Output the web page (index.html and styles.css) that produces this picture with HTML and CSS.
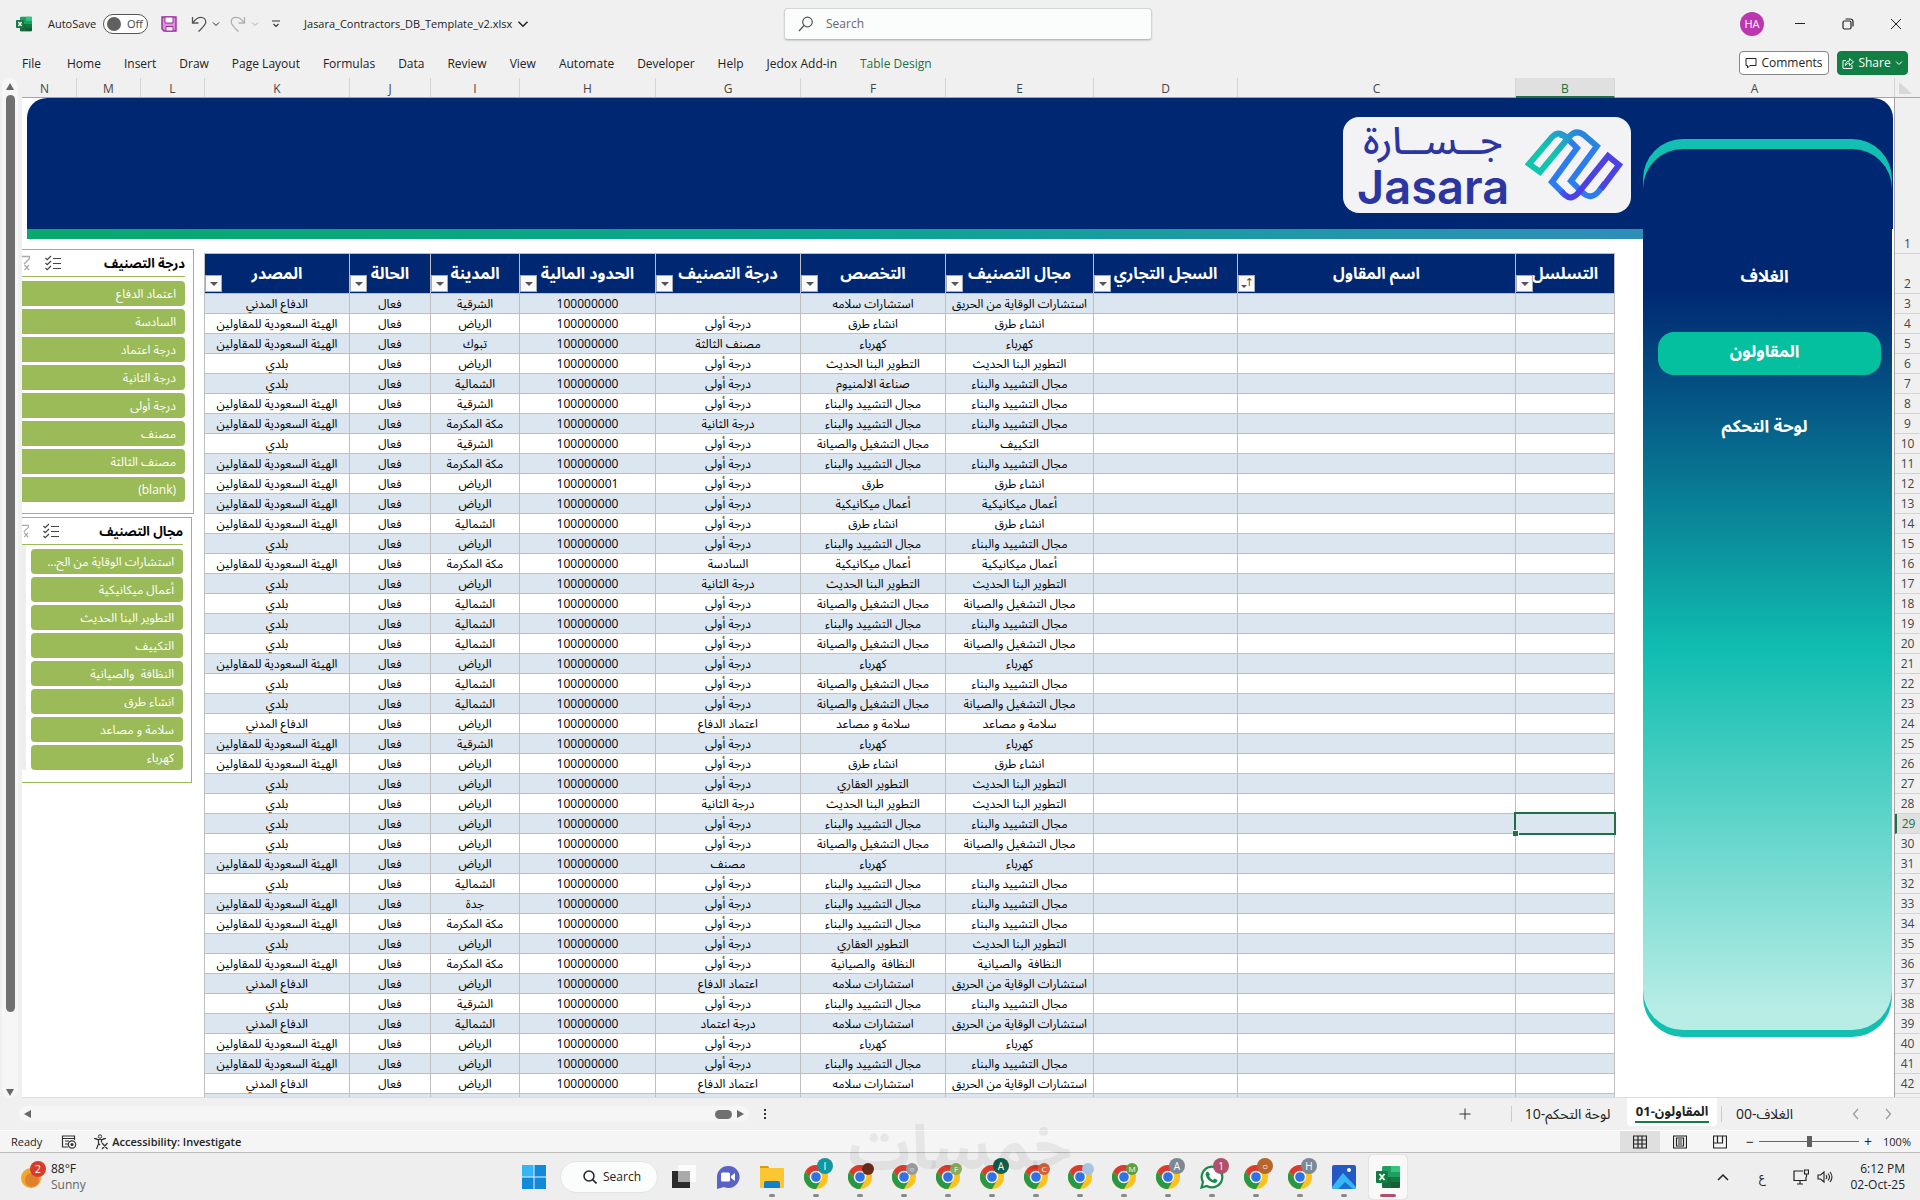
FILE: index.html
```html
<!DOCTYPE html>
<html lang="en">
<head>
<meta charset="utf-8">
<title>Jasara_Contractors_DB_Template_v2.xlsx - Excel</title>
<link rel="stylesheet" href="styles.css">
</head>
<body>
<svg class="defs" aria-hidden="true">
  <defs>
    <symbol id="chrome" viewBox="0 0 24 24">
      <circle cx="12" cy="12" r="12" fill="#fcc31e"/>
      <path d="M1.6 6A12 12 0 0 1 22.4 6H12A6 6 0 0 0 6.8 15Z" fill="#db3b2c"/>
      <path d="M1.6 6A12 12 0 0 0 12 24L17.2 15A6 6 0 0 1 6.8 15Z" fill="#269846"/>
      <circle cx="12" cy="12" r="6.2" fill="#f3f3f3"/>
      <circle cx="12" cy="12" r="4.8" fill="#2f72e8"/>
    </symbol>
    <symbol id="chevron" viewBox="0 0 8 8"><path d="M1 2.5L4 5.5L7 2.5" fill="none" stroke="currentColor"/></symbol>
    <symbol id="excel" viewBox="0 0 24 24">
      <rect x="6" y="1" width="18" height="22" rx="1.5" fill="#1f9f5f"/>
      <path d="M6 12h9v11H7.500a1.500 1.500 0 0 1-1.500-1.500z" fill="#176b3d"/>
      <path d="M15 1h7.500a1.500 1.500 0 0 1 1.500 1.500V7h-9z" fill="#35c481"/>
      <path d="M15 12h9v5h-9z" fill="#107c41"/><path d="M15 17h9v4.500a1.500 1.500 0 0 1-1.500 1.500H15z" fill="#185c37"/>
      <rect x="0" y="6" width="12" height="12" rx="1" fill="#107c41"/>
      <path d="M3.500 9l5 6M8.500 9l-5 6" stroke="#fff" stroke-width="1.800"/>
    </symbol>
    <symbol id="multi" viewBox="0 0 16 16">
      <path d="M.5 3l1.700 1.700L6 1M.5 8l1.700 1.700L6 6M.5 13l1.700 1.700L6 11M8 3.500h8M8 8.500h8M8 13.500h8" fill="none" stroke="#444" stroke-width="1.200"/>
    </symbol>
    <symbol id="clear" viewBox="8 0 8 16">
      <path d="M4 1.500h11.500v2L10 9M10.500 10l4.500 5M15 10l-4.500 5" fill="none" stroke="#aaa" stroke-width="1.300"/>
    </symbol>
  </defs>
</svg>

<header class="titlebar">
  <div class="quick">
    <svg class="i16"><use href="#excel"/></svg>
    <span class="autosave" id="as">AutoSave</span>
    <button class="toggle" aria-labelledby="as"><i></i>Off</button>
    <button class="tool save" aria-label="Save"><svg class="i16" viewBox="0 0 16 16"><path d="M1 1h14v14H3l-2-2z" fill="#dc94d6" stroke="#9a2da0" stroke-width="1.400"/><path d="M4 1h8v6H4z" fill="#fff" stroke="#9a2da0"/><path d="M5 10.500h7V15H5z" fill="#fff" stroke="#9a2da0"/></svg></button>
    <button class="tool undo" aria-label="Undo"><svg class="i16" viewBox="0 0 16 16"><path d="M1.500 1v6h6M1.800 6.700C4 3.500 6.500 1.300 10 1.300c3 0 4.800 2 4.800 4.700 0 3-3.300 5.500-7.300 9.500" fill="none" stroke="#555" stroke-width="1.300"/></svg><svg class="i8"><use href="#chevron"/></svg></button>
    <button class="tool redo" aria-label="Redo"><svg class="i16" viewBox="0 0 16 16"><path d="M14.500 1v6h-6M14.200 6.700C12 3.500 9.500 1.300 6 1.300 3 1.300 1.200 3.300 1.200 6c0 3 3.300 5.500 7.300 9.500" fill="none" stroke="#b0b0b0" stroke-width="1.300"/></svg><svg class="i8"><use href="#chevron"/></svg></button>
    <button class="tool more" aria-label="Customize"><svg class="i8" viewBox="0 0 8 8"><path d="M0 1h8M1.500 4L4 6.500 6.500 4" fill="none" stroke="#333" stroke-width="1.200"/></svg></button>
    <button class="tool filename">Jasara_Contractors_DB_Template_v2.xlsx<svg class="i12"><use href="#chevron"/></svg></button>
  </div>
  <label class="search">
    <svg class="i16" viewBox="0 0 16 16"><circle cx="9.500" cy="6" r="4.800" fill="none" stroke="#555" stroke-width="1.200"/><path d="M6 9.500L1 15" stroke="#555" stroke-width="1.300"/></svg>
    <input type="text" placeholder="Search" aria-label="Search">
  </label>
  <div class="window">
    <button class="avatar">HA</button>
    <button class="tool" aria-label="Minimize"><svg class="i12" viewBox="0 0 12 12"><path d="M1 5.500h10" stroke="#222"/></svg></button>
    <button class="tool" aria-label="Restore"><svg class="i12" viewBox="0 0 12 12"><rect x="1" y="3" width="8" height="8" rx="1.500" fill="none" stroke="#222" stroke-width="1.200"/><path d="M3.500 1h5A2.500 2.500 0 0 1 11 3.500v5" fill="none" stroke="#222" stroke-width="1.200"/></svg></button>
    <button class="tool" aria-label="Close"><svg class="i12" viewBox="0 0 12 12"><path d="M1 1l10 10M11 1L1 11" stroke="#222"/></svg></button>
  </div>
</header>

<div class="ribbon">
  <nav class="tabs">
    <a href="#">File</a><a href="#">Home</a><a href="#">Insert</a><a href="#">Draw</a><a href="#">Page Layout</a><a href="#">Formulas</a><a href="#">Data</a><a href="#">Review</a><a href="#">View</a><a href="#">Automate</a><a href="#">Developer</a><a href="#">Help</a><a href="#">Jedox Add-in</a><a href="#" class="on">Table Design</a>
  </nav>
  <button class="pill"><svg class="i12" viewBox="0 0 12 12"><path d="M1 1.500h10v7H5L2.500 11V8.500H1z" fill="none" stroke="#222"/></svg>Comments</button>
  <button class="pill share"><svg class="i12" viewBox="0 0 12 12"><path d="M4 3.500H1v8h9V8M3.500 8.500C3.500 5.500 5 4 7.500 4V1.500L11.500 5 7.500 8.500V6C6 6 4.500 6.700 3.500 8.500z" fill="none" stroke="#fff"/></svg>Share<svg class="i8"><use href="#chevron"/></svg></button>
</div>

<div class="workbook">
  <div class="vscroll"><i class="up"></i><i class="thumb"></i><i class="down"></i></div>
  <div class="sheet">
    <div class="colheads">
      <span class="cut">N</span><span>M</span><span>L</span><span>K</span><span>J</span><span>I</span><span>H</span><span>G</span><span>F</span><span>E</span><span>D</span><span>C</span><span class="sel">B</span><span>A</span><span class="corner"><i></i></span>
    </div>
    <div class="canvas">
      <div class="banner">
        <div class="brand">
          <div class="brandtext"><span lang="ar" dir="rtl">جــســارة</span><span class="latin">Jasara</span></div>
          <svg class="mark" viewBox="0 0 100 72">
            <defs>
              <linearGradient id="g1" gradientUnits="userSpaceOnUse" x1="0" y1="50" x2="50" y2="0"><stop offset=".5" stop-color="#13c4ae"/><stop offset="1" stop-color="#2a86dc"/></linearGradient>
              <linearGradient id="g2" gradientUnits="userSpaceOnUse" x1="26" y1="52" x2="60" y2="66"><stop offset="0" stop-color="#2c7cf0"/><stop offset=".6" stop-color="#4c42e4"/></linearGradient>
            </defs>
            <g fill="none" stroke-width="6">
              <path d="M72 17L46 52L57 63Q66 72 74 62L80 54" stroke="#2c7cf0"/>
              <path d="M34 6Q38 5 42 9L52 19L27 53L38 64" stroke="#2c7cf0"/>
              <path d="M36 62L40 66Q47 72 54 63L83 27L94 36L76 60" stroke="url(#g2)"/>
              <path d="M40 8Q34 1 27 8L4 35L15 43L44 8Q51 0 59 6L74 19" stroke="url(#g1)"/>
            </g>
          </svg>
        </div>
      </div>
      <div class="stripe"></div>
      <div class="slicers">
        <section class="slicer first" dir="rtl" lang="ar">
          <h2>درجة التصنيف<svg class="i16"><use href="#multi"/></svg><svg class="half"><use href="#clear"/></svg></h2>
          <div class="items"><button>اعتماد الدفاع</button><button>السادسة</button><button>درجة اعتماد</button><button>درجة الثانية</button><button>درجة أولى</button><button>مصنف</button><button>مصنف الثالثة</button><button dir="ltr">(blank)</button></div>
        </section>
        <section class="slicer second" dir="rtl" lang="ar">
          <h2>مجال التصنيف<svg class="i16"><use href="#multi"/></svg><svg class="half"><use href="#clear"/></svg></h2>
          <div class="items"><button>استشارات الوقاية من الح...</button><button>أعمال ميكانيكية</button><button>التطوير البنا الحديث</button><button>التكييف</button><button>النظافة&nbsp; والصيانية</button><button>انشاء طرق</button><button>سلامة و مصاعد</button><button>كهرباء</button></div>
        </section>
      </div>
      <table class="data" dir="rtl" lang="ar">
        <colgroup><col class="wb"><col><col class="wd"><col class="we"><col class="wg"><col class="wg"><col class="wh"><col class="wi"><col class="wj"><col class="wg"></colgroup>
        <thead><tr>
          <th>التسلسل<button aria-label="Filter"></button></th><th>اسم المقاول<button class="sorted" aria-label="Sorted"></button></th><th>السجل التجاري<button aria-label="Filter"></button></th><th>مجال التصنيف<button aria-label="Filter"></button></th><th>التخصص<button aria-label="Filter"></button></th><th>درجة التصنيف<button aria-label="Filter"></button></th><th>الحدود المالية<button aria-label="Filter"></button></th><th>المدينة<button aria-label="Filter"></button></th><th>الحالة<button aria-label="Filter"></button></th><th>المصدر<button aria-label="Filter"></button></th>
        </tr></thead>
        <tbody id="rows"></tbody>
      </table>
      <aside class="side" dir="rtl" lang="ar">
        <nav><a href="#">الغلاف</a><a href="#" class="on">المقاولون</a><a href="#">لوحة التحكم</a></nav>
      </aside>
      <div class="rowheads" id="rowheads"></div>
    </div>
  </div>
</div>

<div class="sheetbar">
  <div class="hscroll"><i class="left"></i><i class="thumb"></i><i class="right"></i></div>
  <span class="dots"><i></i><i></i><i></i></span>
  <button class="add" aria-label="New sheet"><svg class="i16" viewBox="0 0 16 16"><path d="M2.500 8h11M8 2.500v11" stroke="#333"/></svg></button>
  <nav class="sheets" lang="ar"><a href="#" dir="rtl">لوحة التحكم-10</a><a href="#" dir="rtl" class="on"><span>المقاولون-01</span></a><a href="#" dir="rtl">الغلاف-00</a></nav>
  <div class="arrows"><svg class="i12" viewBox="0 0 12 12"><path d="M8 1L3.500 6 8 11" fill="none" stroke="#999" stroke-width="1.200"/></svg><svg class="i12" viewBox="0 0 12 12"><path d="M4 1l4.500 5L4 11" fill="none" stroke="#999" stroke-width="1.200"/></svg></div>
</div>

<div class="status">
  <span>Ready</span>
  <svg class="i16" viewBox="0 0 16 16"><path d="M7 13H1.500V2h12v4M1.500 4.500h12M4 7h4M4 10h3" fill="none" stroke="#333" stroke-width="1.200"/><circle cx="11" cy="10.500" r="3.700" fill="none" stroke="#333" stroke-width="1.200"/><circle cx="11" cy="10.500" r="1.600" fill="#333"/></svg>
  <svg class="i16 acc" viewBox="0 0 16 16"><circle cx="7" cy="2.500" r="1.700" fill="none" stroke="#333"/><path d="M1.500 4.500l4 1.500v4L3.500 15M12.500 4.500l-4 1.500v2.500M1.500 4.500L5 5.500h4l3.500-1M6 10l1 1M9 9l5.500 6M14.500 9L9 15" fill="none" stroke="#333" stroke-width="1.200"/></svg>
  <b>Accessibility: Investigate</b>
  <div class="views">
    <button class="on" aria-label="Normal"><svg class="i14" viewBox="0 0 14 14"><path d="M.5 1h13v12H.5zM.5 5h13M.5 9h13M5 1v12M9 1v12" fill="none" stroke="#222" stroke-width="1.200"/></svg></button>
    <button aria-label="Page layout"><svg class="i14" viewBox="0 0 14 14"><path d="M.5 1h13v12H.5zM3.500 3h7v8h-7zM5 5h4M5 7h4M5 9h4" fill="none" stroke="#222" stroke-width="1.200"/></svg></button>
    <button aria-label="Page break"><svg class="i14" viewBox="0 0 14 14"><path d="M.5 1h13v12H.5zM4.500 1v7h5V1M.5 8H4" fill="none" stroke="#222" stroke-width="1.200"/></svg></button>
  </div>
  <span class="sign">−</span><input class="zoom" type="range" min="0" max="100" value="50" aria-label="Zoom"><span class="sign">+</span>
  <span class="pct">100%</span>
</div>

<footer class="taskbar">
  <div class="weather">
    <svg viewBox="0 0 26 30"><circle cx="10" cy="17" r="10" fill="#f0a52c"/><circle cx="11" cy="19" r="7" fill="#e0802e"/><circle cx="17" cy="8" r="8" fill="#d63c2a"/><text x="17" y="12" text-anchor="middle" class="badge">2</text></svg>
    <div>88°F<br><span>Sunny</span></div>
  </div>
  <div class="apps" id="apps">
    <button class="app" aria-label="Start"><svg class="i24" viewBox="0 0 24 24"><path d="M0 0h11.500v11.500H0z" fill="#34b6f4"/><path d="M12.500 0H24v11.500H12.500zM0 12.500h11.500V24H0zM12.500 12.500H24V24H12.500z" fill="#1389dc"/></svg></button>
    <button class="find"><svg class="i14" viewBox="0 0 14 14"><circle cx="6" cy="6" r="5" fill="none" stroke="#222" stroke-width="1.500"/><path d="M9.500 9.500L13.500 13.500" stroke="#222" stroke-width="1.600"/></svg>Search</button>
    <button class="app" aria-label="Task view"><svg class="i24" viewBox="0 0 24 24"><rect x="0" y="6" width="18" height="17" fill="#2b2a2c"/><rect x="6" y="0" width="18" height="17" fill="#fff" opacity=".8"/><rect x="6" y="6" width="12" height="11" fill="#aaa"/></svg></button>
    <button class="app" aria-label="Chat"><svg class="i24" viewBox="0 0 24 24"><path d="M12 1a11 11 0 1 1-4 21L1 24V12A11 11 0 0 1 12 1z" fill="#5a62c8"/><rect x="5" y="7.500" width="9" height="9" rx="1.500" fill="#fff"/><path d="M15 11l4-3v8l-4-3z" fill="#fff"/></svg></button>
    <button class="app run" aria-label="Files"><svg class="i24" viewBox="0 0 24 24"><path d="M0 1h8l2 3H0z" fill="#d99a12"/><rect y="3" width="24" height="20" rx="1" fill="#fcc633"/><path d="M4 23v-5a2 2 0 0 1 2-2h12a2 2 0 0 1 2 2v5z" fill="#1380cc"/></svg></button>
  </div>
  <div class="tray">
    <svg class="i12" viewBox="0 0 12 12"><path d="M1 9l5-5 5 5" fill="none" stroke="#222" stroke-width="1.500"/></svg>
    <span lang="ar">ع</span>
    <svg class="i16" viewBox="0 0 16 16"><path d="M10 2H1v9.500h12V8M4 15h6M7 11.500V15M11.500 1h4v4h-4zM13.500 5v3" fill="none" stroke="#222" stroke-width="1.200"/></svg>
    <svg class="i16" viewBox="0 0 16 16"><path d="M1 6h2.500L7 3v10L3.500 10H1zM9 6q1.500 2 0 4M11 4.500q3 3.500 0 7M13 3q4 5 0 10" fill="none" stroke="#222" stroke-width="1.100"/></svg>
    <time>6:12 PM<br>02-Oct-25</time>
  </div>
</footer>
<div class="watermark" lang="ar" dir="rtl">خمسات</div>
<script src="app.js"></script>
</body>
</html>
```
FILE: styles.css
```css
* { box-sizing: border-box; }
body {
  margin: 0;
  height: 100vh;
  display: flex;
  flex-direction: column;
  overflow: hidden;
  position: relative;
  background: #f0f0f0;
  color: #222;
  font: 12px/16px "Open Sans", "Noto Sans Arabic", "DejaVu Sans", sans-serif;
}
button { font: inherit; color: inherit; border: 0; padding: 0; background: none; }
a { color: inherit; text-decoration: none; }
i { display: block; }
svg { flex: none; display: block; }
.defs { position: absolute; width: 0; height: 0; }
.i8 { width: 8px; height: 8px; }
.i12 { width: 12px; height: 12px; }
.i14 { width: 14px; height: 14px; }
.i16 { width: 16px; height: 16px; }
.i24 { width: 24px; height: 24px; }

/* title bar */
.titlebar { display: grid; grid-template-columns: 1fr 368px 1fr; align-items: center; height: 48px; padding-left: 16px; flex: none; font-size: 11px; }
.quick, .window { display: flex; align-items: center; }
.autosave { margin-left: 16px; }
.toggle { display: flex; align-items: center; gap: 6px; width: 45px; height: 20px; margin-left: 7px; padding-left: 3px; border: 1px solid #555; border-radius: 10px; background: #fff; color: #444; }
.toggle i { width: 14px; height: 14px; border-radius: 50%; background: #606060; }
.tool { display: flex; align-items: center; gap: 5px; }
.save { margin-left: 13px; }
.undo { margin-left: 14px; }
.redo { margin-left: 10px; color: #b0b0b0; }
.more { margin-left: 13px; }
.filename { margin-left: 24px; }
.search { display: flex; align-items: center; gap: 10px; height: 32px; padding: 0 13px; background: #fbfcfc; border: 1px solid #d4d4d4; border-bottom-color: #bbb; border-radius: 4px; box-shadow: 0 1px 2px #0002; }
.search input { flex: 1; min-width: 0; border: 0; background: none; outline: 0; font: inherit; font-size: 12px; }
.search input::placeholder { color: #666; opacity: 1; }
.window { justify-content: flex-end; }
.window .tool { width: 48px; justify-content: center; }
.avatar { width: 24px; height: 24px; margin-right: 12px; border-radius: 50%; background: #bb36b0; color: #fff; }

/* ribbon */
.ribbon { display: flex; align-items: center; height: 30px; padding: 0 12px 0 22px; gap: 8px; flex: none; }
.tabs { display: flex; gap: 23px; flex: 1; padding-top: 1px; }
.tabs a:first-child { margin-right: 3px; }
.tabs .on { color: #1e7145; }
.pill { display: flex; align-items: center; justify-content: center; gap: 4px; width: 90px; height: 24px; background: #fff; border: 1px solid #888; border-radius: 4px; }
.share { width: 71px; background: #117e43; border-color: #117e43; color: #fff; }

/* workbook */
.workbook { flex: 1; min-height: 0; display: flex; }
.vscroll { width: 16px; margin: 0 4px 0 2px; padding: 5px 4px 2px; display: flex; flex-direction: column; background: #f6f6f6; border-radius: 8px; gap: 5px; }
.vscroll .up { border: 4px solid transparent; border-top: 0; border-bottom: 7px solid #666; }
.vscroll .down { border: 4px solid transparent; border-bottom: 0; border-top: 7px solid #666; margin-top: 72px; }
.vscroll .thumb { flex: 1; width: 9px; border-radius: 5px; background: #707070; }
.sheet { flex: 1; min-width: 0; display: flex; flex-direction: column; border-bottom: 1px solid #ddd; }
.colheads { flex: none; display: grid; grid-template-columns: 55px 64px 64px 145px 81px 89px 136px 145px 145px 148px 144px 1fr 99px 280px 25px; height: 20px; border-bottom: 1px solid #a6a6a6; color: #444; text-align: center; }
.colheads span { height: 19px; border-right: 1px solid #d4d4d4; line-height: 21px; }
.colheads .cut { padding-right: 9px; }
.colheads .sel { height: 20px; background: #e0e0e0; color: #1e7145; border-bottom: 2px solid #1e7145; }
.colheads .corner { border: 0; padding: 4px 8px 0 4px; }
.corner i { height: 12px; background: #d8d8d8; clip-path: polygon(0 0, 100% 100%, 0 100%); }
.canvas { flex: 1; min-height: 0; overflow: hidden; background: #fff; display: grid; grid-template-columns: 182px 1fr 280px 25px; grid-template-rows: 141px 1fr; }

/* banner with the brand card */
.banner { grid-area: 1 / 1 / 2 / 4; margin: 0 2px 0 5px; height: 131px; border-radius: 20px 20px 0 0; background: #002872; display: flex; justify-content: flex-end; padding: 19px 262px 0 0; }
.stripe { grid-area: 1 / 1 / 2 / 3; align-self: end; height: 10px; margin: 0 -28px 0 5px; background: linear-gradient(90deg, #0aa86e, #0ca590 50%, #2f8db8); }
.brand { display: flex; align-items: center; justify-content: space-between; width: 288px; height: 96px; padding: 0 6px 0 14px; border-radius: 16px; background: #f3f3f5; }
.mark { width: 100px; height: 72px; }
.brandtext { color: #2c36a2; width: 152px; font: 500 38px/44px "Noto Sans Arabic", "DejaVu Sans", sans-serif; }
.brandtext span { display: block; text-align: center; white-space: nowrap; }
.brandtext .latin { font: 600 47px/46px Inter, sans-serif; }

/* slicers */
.slicers { grid-area: 2 / 1; padding-top: 10px; }
.slicer { border: 1px solid #9bbb59; border-left: 0; background: #fff; }
.first { width: 172px; height: 265px; margin-bottom: 3px; padding-right: 8px; }
.second { width: 170px; height: 266px; padding-right: 8px; }
.slicer h2 { display: flex; align-items: center; height: 27px; margin: 0; border-bottom: 1px solid #9bbb59; font-size: 13px; color: #000; }
.slicer h2 .i16 { margin-right: auto; }
.half { width: 8px; height: 16px; margin-right: 15px; }
.second .half { margin-right: 14px; width: 7px; }
.items { display: flex; flex-direction: column; gap: 3px; padding-top: 4px; }
.second .items { border-left: 4px solid #eee; padding-left: 5px; }
.items button { height: 25px; padding: 0 9px; background: #9bbb59; color: #fff; text-align: right; }
.first .items button { border-radius: 0 4px 4px 0; }
.second .items button { border-radius: 4px; }

/* data table */
.data { grid-area: 2 / 2; align-self: start; margin-top: 14px; width: 100%; table-layout: fixed; border-spacing: 0; border-left: 1px solid #bfbfbf; border-top: 1px solid #bfbfbf; color: #000; }
.wb { width: 99px; } .wd { width: 144px; } .we { width: 148px; } .wg { width: 145px; } .wh { width: 136px; } .wi { width: 89px; } .wj { width: 81px; }
.data th, .data td { padding: 0; text-align: center; border-right: 1px solid #bfbfbf; border-bottom: 1px solid #bfbfbf; white-space: nowrap; }
.data th { position: relative; height: 40px; padding-bottom: 2px; background: #002872; color: #fff; font-size: 16px; line-height: 24px; }
.data td { height: 20px; line-height: 19px; }
.data tr:nth-child(odd) td { background: #dce6f1; }
.data th button { position: absolute; left: 0; bottom: 1px; width: 17px; height: 17px; background: #fafafa; border: 1px solid #aaa; }
.data th button::after { content: ""; position: absolute; left: 4px; top: 6px; border: 4px solid transparent; border-top-color: #555; border-bottom: 0; }
.data th .sorted::before { content: "↑"; position: absolute; right: 0; top: 0; font: 11px/14px "DejaVu Sans", sans-serif; color: #555; }
.data th .sorted::after { left: 2px; top: 9px; border-width: 3px; border-bottom: 0; }
.data .active { position: relative; }
.data .active::before { content: ""; position: absolute; inset: -2px; border: 2px solid #1e7145; }
.data .active::after { content: ""; position: absolute; left: -3px; bottom: -3px; width: 5px; height: 5px; background: #1e7145; border: solid #fff; border-width: 1px 1px 0 0; }

/* side navigation */
.side { grid-area: 1 / 3 / 3 / 4; align-self: start; height: 898px; margin: 41px 3px 0 28px; padding: 10px 0 7px; border-radius: 40px; background: #12bfb0; }
.side nav { display: flex; flex-direction: column; gap: 32px; height: 881px; padding: 108px 11px 0 15px; border-radius: 40px; background: linear-gradient(#002872 16%, #10beb0 57%, #b8ede6 98%); font: bold 17px/41px "Noto Sans Arabic", "DejaVu Sans", sans-serif; color: #fff; text-align: center; }
.side a { height: 43px; padding-right: 10px; border-radius: 16px; }
.side .on { background: #04c09f; }
.rowheads { grid-area: 1 / 4 / 3 / 5; background: #f0f0f0; border-left: 1px solid #a6a6a6; margin-left: -1px; color: #444; text-align: center; overflow: hidden; }
.rowheads span { display: flex; align-items: flex-end; justify-content: center; height: 20px; line-height: 18px; border-bottom: 1px solid #d4d4d4; }
.rowheads span:nth-child(1) { height: 156px; }
.rowheads span:nth-child(2) { height: 40px; }
.rowheads .sel { background: #e0e0e0; color: #1e7145; border-left: 2px solid #1e7145; }

/* sheet tabs */
.sheetbar { display: flex; align-items: center; height: 32px; flex: none; padding: 0 26px 0 19px; }
.hscroll { width: 730px; height: 16px; border-radius: 8px; background: #f6f6f6; display: flex; align-items: center; padding: 0 5px; gap: 5px; }
.hscroll .left { border: 4px solid transparent; border-left: 0; border-right: 7px solid #666; margin-right: auto; }
.hscroll .right { border: 4px solid transparent; border-right: 0; border-left: 7px solid #666; }
.hscroll .thumb { width: 17px; height: 9px; border-radius: 5px; background: #707070; }
.dots { display: grid; gap: 2px; margin-left: 15px; }
.dots i { width: 2px; height: 2px; background: #333; }
.add { margin-left: auto; }
.sheets { display: flex; align-self: stretch; align-items: center; margin-left: 38px; font-size: 14px; }
.sheets a { width: 112px; text-align: center; border-left: 1px solid #ccc; white-space: nowrap; }
.sheets a:last-child { width: 84px; padding-left: 2px; }
.sheets .on { width: 90px; height: 28px; align-self: flex-start; margin: 0 4px; padding-top: 4px; background: #fff; border: 0; border-radius: 0 0 4px 4px; font-weight: bold; font-size: 13px; }
.sheets .on span { display: block; margin: 0 8px; height: 21px; line-height: 19px; border-bottom: 2px solid #117e43; }
.arrows { display: flex; gap: 20px; margin-left: 45px; }

/* status bar */
.status { display: flex; align-items: center; height: 23px; flex: none; padding: 0 9px 0 11px; background: #f5f5f5; border-top: 1px solid #fff; border-bottom: 1px solid #bdbdbd; font-size: 11px; }
.status > .i16 { margin-left: 19px; }
.status > .acc { margin: 0 3px 0 16px; }
.status b { font-weight: 600; }
.views { display: flex; align-self: stretch; margin-left: auto; }
.views button { width: 40px; display: grid; place-items: center; }
.views .on { background: #dfdfdf; }
.sign { width: 14px; text-align: center; font-size: 14px; }
.views + .sign { margin-left: 3px; }
.zoom { appearance: none; width: 100px; height: 16px; margin: 0 2px; background: linear-gradient(#666, #666) center / 100% 1px no-repeat; }
.zoom::-webkit-slider-thumb { appearance: none; width: 5px; height: 11px; background: #606060; }
.pct { width: 36px; text-align: right; }

/* taskbar */
.taskbar { display: grid; grid-template-columns: 1fr auto 1fr; align-items: center; height: 47px; flex: none; background: #eee; padding-left: 2px; }
.weather { display: flex; gap: 4px; padding-left: 19px; }
.weather svg { width: 26px; height: 30px; }
.weather span { color: #666; }
.badge { font-size: 11px; fill: #fff; }
.apps { display: flex; align-items: center; }
.app { position: relative; width: 44px; height: 44px; display: grid; place-items: center; }
.app.run::after { content: ""; position: absolute; left: 19px; bottom: 2px; width: 6px; height: 3px; border-radius: 2px; background: #888; }
.app em { position: absolute; right: 5px; top: 3px; width: 16px; height: 16px; border-radius: 50%; color: #fff; font: 10px/16px "Open Sans", sans-serif; text-align: center; }
.app em.small { width: 12px; height: 12px; top: 8px; right: 8px; font-size: 8px; line-height: 12px; }
.app.front { background: #f8f8f8; border-radius: 4px; box-shadow: 0 0 1px #999; width: 38px; margin: 0 3px; }
.app.front::after { left: 11px; width: 16px; background: #b0506a; }
.find { display: flex; align-items: center; gap: 6px; width: 98px; height: 32px; margin: 0 4px; padding-left: 22px; border-radius: 16px; background: #fbfcfc; border: 1px solid #e4e4e4; }
.tray { display: flex; align-items: center; justify-content: flex-end; padding-right: 15px; }
.tray span { margin: 0 28px 0 30px; }
.tray .i16 { margin-right: 8px; }
.tray time { width: 64px; text-align: right; }

.watermark { position: absolute; left: 820px; bottom: 0; width: 280px; text-align: center; font: bold 62px/100px "Noto Sans Arabic", "DejaVu Sans", sans-serif; color: #0000000f; pointer-events: none; }
```
FILE: app.js
```js
const fire = "استشارات الوقاية من الحريق", safe = "استشارات سلامه", roads = "انشاء طرق", elec = "كهرباء";
const modern = "التطوير البنا الحديث", build = "مجال التشييد والبناء", operate = "مجال التشغيل والصيانة";
const mech = "أعمال ميكانيكية", lifts = "سلامة و مصاعد", estate = "التطوير العقاري", clean = "النظافة\u00a0 والصيانية";
const first = "درجة أولى", second = "درجة الثانية", defence = "اعتماد الدفاع";
const riyadh = "الرياض", east = "الشرقية", north = "الشمالية", makkah = "مكة المكرمة";
const civil = "الدفاع المدني", board = "الهيئة السعودية للمقاولين", balady = "بلدي";

// field, specialty, grade, city, source, limit (when it differs)
const records = [
  [fire, safe, "", east, civil],
  [roads, roads, first, riyadh, board],
  [elec, elec, "مصنف الثالثة", "تبوك", board],
  [modern, modern, first, riyadh, balady],
  [build, "صناعة الالمنيوم", first, north, balady],
  [build, build, first, east, board],
  [build, build, second, makkah, board],
  ["التكييف", operate, first, east, balady],
  [build, build, first, makkah, board],
  [roads, "طرق", first, riyadh, board, "100000001"],
  [mech, mech, first, riyadh, board],
  [roads, roads, first, north, board],
  [build, build, first, riyadh, balady],
  [mech, mech, "السادسة", makkah, board],
  [modern, modern, second, riyadh, balady],
  [operate, operate, first, north, balady],
  [build, build, first, north, balady],
  [operate, operate, first, north, balady],
  [elec, elec, first, riyadh, board],
  [build, operate, first, north, balady],
  [operate, operate, first, north, balady],
  [lifts, lifts, defence, riyadh, civil],
  [elec, elec, first, east, board],
  [roads, roads, first, riyadh, board],
  [modern, estate, first, riyadh, balady],
  [modern, modern, second, riyadh, balady],
  [build, build, first, riyadh, balady],
  [operate, operate, first, riyadh, balady],
  [elec, elec, "مصنف", riyadh, board],
  [build, build, first, north, balady],
  [build, build, first, "جدة", board],
  [build, build, first, makkah, board],
  [modern, estate, first, riyadh, balady],
  [clean, clean, first, makkah, board],
  [fire, safe, defence, riyadh, civil],
  [build, build, first, east, balady],
  [fire, safe, "درجة اعتماد", north, civil],
  [elec, elec, first, riyadh, board],
  [build, build, first, riyadh, board],
  [fire, safe, defence, riyadh, civil],
];

document.getElementById("rows").innerHTML = records.map(([field, spec, grade, city, source, limit = "100000000"], i) =>
  `<tr><td${i === 26 ? ' class="active"' : ""}></td><td></td><td></td>` +
  [field, spec, grade, limit, city, "فعال", source].map(t => `<td>${t}</td>`).join("") + "</tr>"
).join("") + `<tr>${"<td></td>".repeat(10)}</tr>`;

document.getElementById("rowheads").innerHTML =
  Array.from({ length: 42 }, (_, i) => `<span${i === 28 ? ' class="sel"' : ""}>${i + 1}</span>`).join("");

const chrome = '<svg class="i24"><use href="#chrome"/></svg>';
const whatsapp = '<svg class="i24" viewBox="0 0 24 24"><path d="M1.500 22.500L3 17A10.300 10.300 0 1 1 7 21z" fill="#fff" stroke="#1a8a4c" stroke-width="2.200"/><path d="M8 6.500l2 3-1 1.500q1.500 3 4 4l1.500-1.500 3 1.500q-.5 3-3 3-7-1-9-8.500 0-2.500 2.500-3z" fill="#1a8a4c"/></svg>';
const photos = '<svg class="i24" viewBox="0 0 24 24"><rect width="24" height="24" rx="2" fill="#2458c4"/><path d="M0 22L11 8l13 14q0 2-2 2H2q-2 0-2-2z" fill="#35b8f4"/><path d="M6 24l7-7 8 7z" fill="#1a6fd8"/><circle cx="17" cy="5" r="2" fill="#fff"/></svg>';
const excel = '<svg class="i24"><use href="#excel"/></svg>';
const apps = [
  [chrome, "I", "#1296a0"], [chrome, "", "#6a2d1c", 1], [chrome, "○", "#999", 1], [chrome, "F", "#8aae5a", 1],
  [chrome, "A", "#14604c"], [chrome, "C", "#d8603a", 1], [chrome, "", "#a8c4e4", 1], [chrome, "M", "#5e9e3e", 1],
  [chrome, "A", "#7c8894"], [whatsapp, "1", "#b0506a"], [chrome, "○", "#b8652c"], [chrome, "H", "#7c8894"],
  [photos], [excel],
];
document.getElementById("apps").insertAdjacentHTML("beforeend", apps.map(([icon, mark, colour, small], i) =>
  `<button class="app run${i === apps.length - 1 ? " front" : ""}">${icon}` +
  (colour ? `<em class="${small ? "small" : ""}" style="background:${colour}">${mark}</em>` : "") + "</button>"
).join(""));
```
